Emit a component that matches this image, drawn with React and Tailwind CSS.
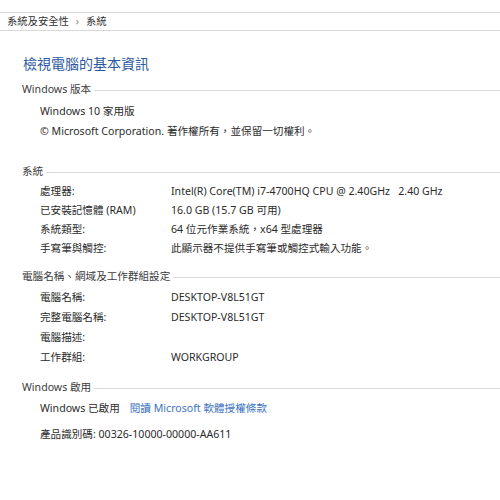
const FONT = { fontFamily: '"Noto Sans", "Noto Sans CJK TC", sans-serif' };

function SectionHeader({ title, className = "" }) {
  return (
    <div className={`flex items-center h-[20px] pl-[22px] gap-[3px] ${className}`}>
      <span className="text-[10.6px] text-[#3c3c3c] whitespace-nowrap">{title}</span>
      <div className="flex-1 h-px bg-[#dcdcdc]" />
    </div>
  );
}

function Row({ label, value, h = "h-[19px]" }) {
  return (
    <div className={`flex items-center ${h} pl-[40px] text-[10.6px] text-[#2b2b2b]`}>
      <span className="w-[131px] whitespace-nowrap">{label}</span>
      <span className="whitespace-pre">{value}</span>
    </div>
  );
}

export default function App() {
  return (
    <div className="w-[500px] h-[500px] bg-white pt-[12px] overflow-hidden" style={FONT}>
      {/* breadcrumb */}
      <div className="h-[19px] border-y border-[#d9d9d9] flex items-center pl-[7px] text-[10.3px] text-[#333]">
        系統及安全性
        <span className="mx-[7px] text-[#888]">›</span>
        系統
      </div>

      <div className="mt-[22px] h-[20px] flex items-center pl-[23px] text-[14px] text-[#2c5aa0]">
        檢視電腦的基本資訊
      </div>

      <SectionHeader title="Windows 版本" className="mt-[7px]" />
      <div className="mt-[2px] h-[20px] flex items-center pl-[40px] text-[10.6px] text-[#2b2b2b]">Windows 10 家用版</div>
      <div className="h-[19px] flex items-center pl-[40px] text-[10.6px] text-[#2b2b2b]">
        © Microsoft Corporation. 著作權所有，並保留一切權利。
      </div>

      <SectionHeader title="系統" className="mt-[21px]" />
      <Row label="處理器:" value="Intel(R) Core(TM) i7-4700HQ CPU @ 2.40GHz   2.40 GHz" />
      <Row label="已安裝記憶體 (RAM)" value="16.0 GB (15.7 GB 可用)" />
      <Row label="系統類型:" value="64 位元作業系統，x64 型處理器" />
      <Row label="手寫筆與觸控:" value="此顯示器不提供手寫筆或觸控式輸入功能。" />

      <SectionHeader title="電腦名稱、網域及工作群組設定" className="mt-[9px]" />
      <div className="mt-[1px]">
        <Row h="h-[20px]" label="電腦名稱:" value="DESKTOP-V8L51GT" />
        <Row h="h-[20px]" label="完整電腦名稱:" value="DESKTOP-V8L51GT" />
        <Row h="h-[20px]" label="電腦描述:" value="" />
        <Row h="h-[20px]" label="工作群組:" value="WORKGROUP" />
      </div>

      <SectionHeader title="Windows 啟用" className="mt-[10px]" />
      <div className="mt-[1px] h-[20px] flex items-center pl-[40px] text-[10.6px] text-[#2b2b2b] gap-[10px]">
        <span>Windows 已啟用</span>
        <span className="text-[#3b73c0]">閱讀 Microsoft 軟體授權條款</span>
      </div>
      <div className="mt-[6px] h-[20px] flex items-center pl-[40px] text-[10.6px] text-[#2b2b2b]">
        產品識別碼: 00326-10000-00000-AA611
      </div>
    </div>
  );
}
